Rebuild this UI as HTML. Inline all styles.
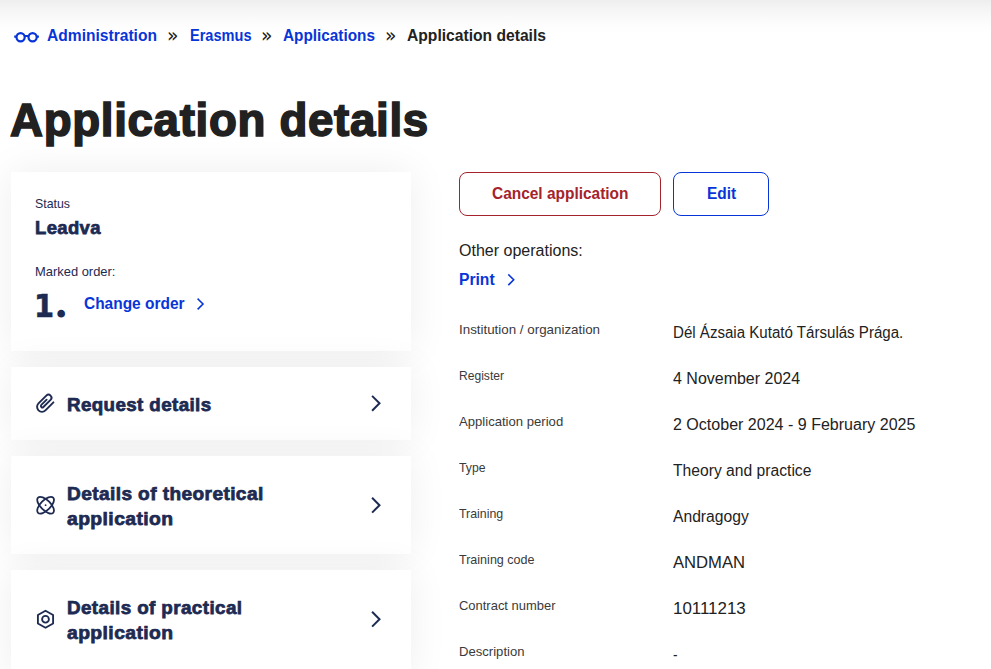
<!DOCTYPE html>
<html lang="en">
<head>
<meta charset="utf-8">
<title>Application details</title>
<style>
html,body{margin:0;padding:0;background:#fff;}
body{width:991px;height:669px;overflow:hidden;font-family:"Liberation Sans",sans-serif;}
#root{position:relative;width:991px;height:669px;overflow:hidden;background:#fff;}
.topshade{position:absolute;left:0;top:0;width:991px;height:34px;background:linear-gradient(to bottom,#eeeeee 0%,#f4f4f4 22%,#f9f9f9 48%,#fdfdfd 76%,#ffffff 100%);}
nav,aside,main,dl{display:block;margin:0;padding:0;position:static;}
.t{position:absolute;display:block;white-space:nowrap;transform-origin:0 0;font-family:"Liberation Sans",sans-serif;font-weight:400;font-style:normal;margin:0;padding:0;text-decoration:none;}
.card{position:absolute;display:block;left:11px;width:400px;background:#fff;box-shadow:0 0 38px rgba(0,0,0,0.07);text-decoration:none;}
.btn{position:absolute;display:block;top:172px;height:44px;box-sizing:border-box;border-radius:8px;background:#fff;margin:0;padding:0;font:inherit;text-align:left;cursor:pointer;}
svg{position:absolute;left:0;top:0;overflow:visible;}
</style>
</head>
<body>
<div id="root">
<div class="topshade"></div>

<nav aria-label="Breadcrumb">
<svg width="60" height="60" viewBox="0 0 60 60" fill="none" stroke="#0835d8" stroke-width="2.2"><circle cx="20.6" cy="37.3" r="4.1"/><circle cx="32.6" cy="37.3" r="4.1"/><path d="M24.5 36H28.7M14.2 36.6H16.5M36.7 36.6H38.9"/></svg>
<a id="bc1" class="t" href="#" style="left:47.0px;top:28px;font-size:16px;line-height:16px;font-weight:700;color:#0835d8;transform:scaleX(0.9744);">Administration</a>
<span id="bs1" class="t" style="left:167.4px;top:25px;font-size:20px;line-height:20px;color:#222222;font-family:'DejaVu Sans',sans-serif;transform:scaleX(0.9306);">»</span>
<a id="bc2" class="t" href="#" style="left:189.5px;top:28px;font-size:16px;line-height:16px;font-weight:700;color:#0835d8;transform:scaleX(0.9098);">Erasmus</a>
<span id="bs2" class="t" style="left:260.9px;top:25px;font-size:20px;line-height:20px;color:#222222;font-family:'DejaVu Sans',sans-serif;transform:scaleX(0.9306);">»</span>
<a id="bc3" class="t" href="#" style="left:283.3px;top:28px;font-size:16px;line-height:16px;font-weight:700;color:#0835d8;transform:scaleX(0.9582);">Applications</a>
<span id="bs3" class="t" style="left:384.9px;top:25px;font-size:20px;line-height:20px;color:#222222;font-family:'DejaVu Sans',sans-serif;transform:scaleX(0.9306);">»</span>
<span id="bc4" class="t" style="left:407.0px;top:28px;font-size:16px;line-height:16px;font-weight:700;color:#222222;transform:scaleX(0.9772);">Application details</span>
</nav>
<h1 id="h1" class="t" style="left:10.2px;top:98px;font-size:45.6px;line-height:45.6px;font-weight:700;color:#212121;-webkit-text-stroke:1.6px #212121;letter-spacing:0.7px;transform:scaleX(1.0006);">Application details</h1>
<aside>
<section class="card" style="top:172px;height:179px;">
<span id="st1" class="t" style="left:23.6px;top:25px;font-size:13px;line-height:13px;color:#1d2a52;transform:scaleX(0.9496);">Status</span>
<strong id="st2" class="t" style="left:23.8px;top:46px;font-size:19.0px;line-height:19.0px;font-weight:700;color:#1d2a52;-webkit-text-stroke:0.75px #1d2a52;letter-spacing:0.4px;transform:scaleX(0.9705);">Leadva</strong>
<span id="st3" class="t" style="left:23.7px;top:93px;font-size:13px;line-height:13px;color:#1d2a52;transform:scaleX(0.9936);">Marked order:</span>
<span class="ord"><span id="st4a" class="t" style="left:23.2px;top:119px;font-size:31.6px;line-height:31.6px;font-weight:700;color:#1d2a52;font-family:'DejaVu Sans',sans-serif;-webkit-text-stroke:0.6px #1d2a52;transform:scaleX(0.9143);">1</span><span id="st4b" class="t" style="left:43.0px;top:111px;font-size:41px;line-height:41px;font-weight:700;color:#1d2a52;font-family:'DejaVu Serif',sans-serif;">.</span></span>
<a id="st5" class="t" href="#" style="left:72.5px;top:124px;font-size:16px;line-height:16px;font-weight:700;color:#0835d8;transform:scaleX(0.9662);">Change order</a>
<svg width="400" height="179" viewBox="11 172 400 179" fill="none" stroke="#0835d8" stroke-width="1.6" stroke-linecap="square"><polyline points="198.2,299.2 203,304 198.2,308.8"/></svg>
</section>
<a class="card" href="#" style="top:367px;height:73px;">
<svg width="400" height="73" viewBox="11 367 400 73" fill="none" stroke="#1d2a52" stroke-width="1.9" stroke-linecap="round" stroke-linejoin="round"><g transform="translate(45.15 403.25) rotate(-45)"><path d="M6.5 5.2L-4.8 5.2A4.9 4.9 0 0 1-4.8-4.6L6.25-4.6A3 3 0 0 1 6.25 1.4L-3.9 1.4A1.45 1.45 0 0 1-3.9-1.5L3.6-1.5"/></g></svg>
<span id="n1" class="t" style="left:56.0px;top:29px;font-size:18.8px;line-height:18.8px;font-weight:700;color:#1d2a52;-webkit-text-stroke:0.75px #1d2a52;letter-spacing:0.4px;transform:scaleX(0.9977);">Request details</span>
<svg width="400" height="73" viewBox="11 367 400 73" fill="none" stroke="#1d2a52" stroke-width="2" stroke-linecap="square"><polyline points="372.8,396.6 379.5,403.3 372.8,410.0"/></svg>
</a>
<a class="card" href="#" style="top:456px;height:98px;">
<svg width="400" height="98" viewBox="11 456 400 98" fill="none" stroke="#1d2a52" stroke-width="1.8"><ellipse cx="45.6" cy="505.2" rx="10.7" ry="5" transform="rotate(45 45.6 505.2)"/><ellipse cx="45.6" cy="505.2" rx="10.7" ry="5" transform="rotate(-45 45.6 505.2)"/><circle cx="45.6" cy="505.2" r="0.9" fill="#1d2a52" stroke="none"/></svg>
<span id="n2a" class="t" style="left:55.6px;top:29px;font-size:18.8px;line-height:18.8px;font-weight:700;color:#1d2a52;-webkit-text-stroke:0.75px #1d2a52;letter-spacing:0.4px;transform:scaleX(1.0159);">Details of theoretical</span>
<span id="n2b" class="t" style="left:55.6px;top:54px;font-size:18.8px;line-height:18.8px;font-weight:700;color:#1d2a52;-webkit-text-stroke:0.75px #1d2a52;letter-spacing:0.4px;transform:scaleX(1.0286);">application</span>
<svg width="400" height="98" viewBox="11 456 400 98" fill="none" stroke="#1d2a52" stroke-width="2" stroke-linecap="square"><polyline points="372.8,498.5 379.5,505.2 372.8,511.9"/></svg>
</a>
<a class="card" href="#" style="top:570px;height:110px;">
<svg width="400" height="110" viewBox="11 570 400 110" fill="none" stroke="#1d2a52" stroke-width="1.85" stroke-linejoin="round"><polygon points="45.5,610.7 53.1,615 53.1,623.5 45.5,627.8 37.9,623.5 37.9,615"/><circle cx="45.5" cy="619.25" r="3.4"/></svg>
<span id="n3a" class="t" style="left:55.6px;top:29px;font-size:18.8px;line-height:18.8px;font-weight:700;color:#1d2a52;-webkit-text-stroke:0.75px #1d2a52;letter-spacing:0.4px;transform:scaleX(1.0022);">Details of practical</span>
<span id="n3b" class="t" style="left:55.6px;top:54px;font-size:18.8px;line-height:18.8px;font-weight:700;color:#1d2a52;-webkit-text-stroke:0.75px #1d2a52;letter-spacing:0.4px;transform:scaleX(1.0286);">application</span>
<svg width="400" height="110" viewBox="11 570 400 110" fill="none" stroke="#1d2a52" stroke-width="2" stroke-linecap="square"><polyline points="372.8,612.5 379.5,619.2 372.8,625.9"/></svg>
</a>
</aside>
<main>
<button type="button" class="btn" style="left:459px;width:202px;border:1px solid #a5232b;"><span id="b1" class="t" style="left:32.0px;top:13px;font-size:16px;line-height:16px;font-weight:700;color:#a5232b;transform:scaleX(0.9655);">Cancel application</span></button>
<button type="button" class="btn" style="left:673px;width:96px;border:1px solid #0835d8;"><span id="b2" class="t" style="left:33.3px;top:13px;font-size:16px;line-height:16px;font-weight:700;color:#0835d8;transform:scaleX(0.9663);">Edit</span></button>
<span id="o1" class="t" style="left:458.8px;top:243px;font-size:16px;line-height:16px;color:#222222;transform:scaleX(1.0014);">Other operations:</span>
<a id="o2" class="t" href="#" style="left:459.4px;top:272px;font-size:16px;line-height:16px;font-weight:700;color:#0835d8;transform:scaleX(0.9766);">Print</a>
<svg width="991" height="300" viewBox="0 0 991 300" fill="none" stroke="#0835d8" stroke-width="1.6" stroke-linecap="square"><polyline points="508.9,275 513.7,279.8 508.9,284.6"/></svg>
<dl>
<dt id="l0" class="t" style="left:459.2px;top:323px;font-size:13px;line-height:13px;color:#3a3a3a;transform:scaleX(1.0269);">Institution / organization</dt>
<dd id="v0" class="t" style="left:673.3px;top:325px;font-size:16px;line-height:16px;color:#222222;transform:scaleX(0.9428);">Dél Ázsaia Kutató Társulás Prága.</dd>
<dt id="l1" class="t" style="left:459.2px;top:369px;font-size:13px;line-height:13px;color:#3a3a3a;transform:scaleX(0.9293);">Register</dt>
<dd id="v1" class="t" style="left:673.3px;top:371px;font-size:16px;line-height:16px;color:#222222;transform:scaleX(0.9993);">4 November 2024</dd>
<dt id="l2" class="t" style="left:459.2px;top:415px;font-size:13px;line-height:13px;color:#3a3a3a;transform:scaleX(1.0081);">Application period</dt>
<dd id="v2" class="t" style="left:673.3px;top:417px;font-size:16px;line-height:16px;color:#222222;transform:scaleX(1.0020);">2 October 2024 - 9 February 2025</dd>
<dt id="l3" class="t" style="left:459.2px;top:461px;font-size:13px;line-height:13px;color:#3a3a3a;transform:scaleX(0.9401);">Type</dt>
<dd id="v3" class="t" style="left:673.3px;top:463px;font-size:16px;line-height:16px;color:#222222;transform:scaleX(0.9787);">Theory and practice</dd>
<dt id="l4" class="t" style="left:459.2px;top:507px;font-size:13px;line-height:13px;color:#3a3a3a;transform:scaleX(0.9509);">Training</dt>
<dd id="v4" class="t" style="left:673.3px;top:509px;font-size:16px;line-height:16px;color:#222222;transform:scaleX(0.9782);">Andragogy</dd>
<dt id="l5" class="t" style="left:459.2px;top:553px;font-size:13px;line-height:13px;color:#3a3a3a;transform:scaleX(0.9643);">Training code</dt>
<dd id="v5" class="t" style="left:673.3px;top:555px;font-size:16px;line-height:16px;color:#222222;transform:scaleX(1.0397);">ANDMAN</dd>
<dt id="l6" class="t" style="left:459.2px;top:599px;font-size:13px;line-height:13px;color:#3a3a3a;transform:scaleX(0.9966);">Contract number</dt>
<dd id="v6" class="t" style="left:673.3px;top:601px;font-size:16px;line-height:16px;color:#222222;transform:scaleX(1.0565);">10111213</dd>
<dt id="l7" class="t" style="left:459.2px;top:645px;font-size:13px;line-height:13px;color:#3a3a3a;transform:scaleX(1.0072);">Description</dt>
<dd id="v7" class="t" style="left:673.3px;top:647px;font-size:16px;line-height:16px;color:#222222;transform:scaleX(0.8446);">-</dd>
</dl>
</main>
</div>
</body>
</html>
